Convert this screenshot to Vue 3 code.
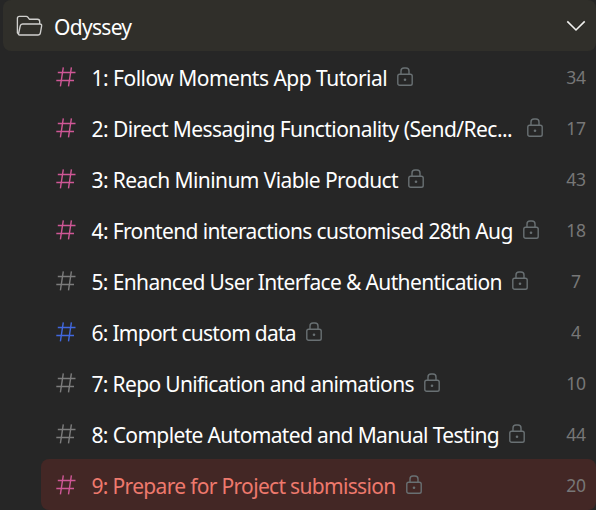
<script setup>
const channels = [
  { title: '1: Follow Moments App Tutorial', count: 34, tone: 'pink', spacing: -0.51 },
  { title: '2: Direct Messaging Functionality (Send/Rec...', count: 17, tone: 'pink', spacing: -0.57, clipped: true },
  { title: '3: Reach Mininum Viable Product', count: 43, tone: 'pink', spacing: -0.59 },
  { title: '4: Frontend interactions customised 28th Aug', count: 18, tone: 'pink', spacing: -0.63 },
  { title: '5: Enhanced User Interface & Authentication', count: 7, tone: 'gray', spacing: -0.64 },
  { title: '6: Import custom data', count: 4, tone: 'blue', spacing: -0.73 },
  { title: '7: Repo Unification and animations', count: 10, tone: 'gray', spacing: -0.665 },
  { title: '8: Complete Automated and Manual Testing', count: 44, tone: 'gray', spacing: -0.64 },
  { title: '9: Prepare for Project submission', count: 20, tone: 'pink', spacing: -0.68, active: true }
]
</script>

<template>
  <main class="panel">
    <header class="folder">
      <svg class="folder-icon" viewBox="0 0 28 22" width="28" height="22">
        <path d="M2.5 19.2 1.4 17.8V3.4Q1.4 1.4 3.4 1.4H10.2Q11.2 1.4 11.8 2.2L13.3 4.2H21.5Q23.7 4.2 23.7 6.4V8.6M2.5 19.2 4.2 11Q4.7 9 6.6 9H23.8Q26 9 25.6 11.2L24.4 17.8Q24 20 21.9 20H3.6Q2.3 20 2.5 19.2Z" />
      </svg>
      <span class="folder-name">Odyssey</span>
      <svg class="chevron" viewBox="0 0 20 12" width="20" height="12">
        <path d="M1.3 1.4 10 10 18.7 1.4" />
      </svg>
    </header>
    <ul class="channels">
      <li v-for="c in channels" :key="c.title" class="channel" :class="{ active: c.active }">
        <svg class="hash" :class="c.tone" viewBox="0 0 20 20" width="20" height="20">
          <path d="M7.3 .3 4.4 19.3M15.4 .3 12.5 19.3M1.8 5.5H19.5M.3 13.5H18" />
        </svg>
        <span class="title" :class="{ clipped: c.clipped }" :style="{ letterSpacing: c.spacing + 'px' }">{{ c.title }}</span>
        <svg class="lock" viewBox="0 0 16 20" width="16" height="20">
          <rect x=".8" y="7.3" width="14.4" height="11" rx="1.8" />
          <path d="M4 7.3V4Q4 1 7 1H9Q12 1 12 4V7.3" />
          <circle cx="8" cy="12.8" r="1.3" />
        </svg>
        <span class="count">{{ c.count }}</span>
      </li>
    </ul>
  </main>
</template>

<style>
body {
  background: #262626;
  overflow: hidden;
}
</style>

<style scoped>
.panel {
  width: 596px;
  height: 510px;
  box-sizing: border-box;
  padding-left: 3px;
  overflow: hidden;
  background: #262626;
  font-family: "Noto Sans", "Open Sans", sans-serif;
  font-size: 21px;
  line-height: 30px;
  color: #fff;
}
.folder {
  display: flex;
  align-items: center;
  height: 51px;
  box-sizing: border-box;
  padding: 0 10px 0 13px;
  border-radius: 8px;
  background: #302f2a;
}
.folder-icon {
  fill: none;
  stroke: #d0d0ce;
  stroke-width: 1.35;
  stroke-linejoin: round;
}
.folder-name {
  flex: 1;
  margin: 2px 0 0 10px;
  letter-spacing: -0.7px;
}
.chevron {
  fill: none;
  stroke: #f1f1ef;
  stroke-width: 1.6;
}
.channels {
  margin: 0;
  padding: 0 0 0 38px;
  list-style: none;
}
.channel {
  display: flex;
  align-items: center;
  height: 51px;
  box-sizing: border-box;
  padding: 0 10px 0 15px;
  border-radius: 8px;
  white-space: nowrap;
}
.active {
  background: #432725;
  color: #ee796d;
}
.hash {
  flex: none;
  margin-top: 1px;
  fill: none;
  stroke-width: 1.4;
}
.pink { stroke: #cf5796; }
.gray { stroke: #7c7c7c; }
.blue { stroke: #4168df; }
.title {
  margin: 2px 0 0 15.5px;
}
.clipped {
  margin-right: 5px;
}
.lock {
  flex: none;
  margin: 1px 0 0 10px;
  fill: none;
  stroke: #697073;
  stroke-width: 1.4;
}
.lock circle {
  fill: #697073;
  stroke: none;
}
.count {
  width: 20px;
  display: flex;
  justify-content: center;
  margin: 1px 0 0 auto;
  color: #777;
  font-size: 17.5px;
  letter-spacing: -0.2px;
}
</style>
